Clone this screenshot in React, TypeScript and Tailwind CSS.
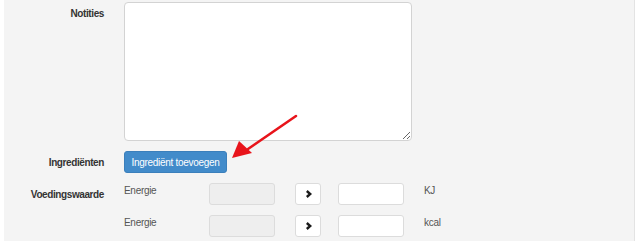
const font = { fontFamily: '"Liberation Sans", Arial, sans-serif' };

function Chevron() {
  return (
    <svg width="7" height="8" viewBox="0 0 7 8" className="block">
      <path d="M1.8 1 L5.2 4 L1.8 7" fill="none" stroke="#1a1a1a" strokeWidth="2.4" strokeLinejoin="miter" />
    </svg>
  );
}

function EnergyRow({ unit }: { unit: string }) {
  return (
    <div className="flex items-start h-[22px]">
      <span className="w-[85px] text-[10px] tracking-[-0.3px] text-[#555] leading-none pt-[3px]">Energie</span>
      <input
        disabled
        className="w-[66px] h-[22px] rounded-[3px] border border-[#dcdcdc] bg-[#eeeeee]"
      />
      <button className="ml-[20px] w-[26px] h-[22px] rounded-[3px] border border-[#dcdcdc] bg-white flex items-center justify-center">
        <Chevron />
      </button>
      <input className="ml-[17px] w-[66px] h-[22px] rounded-[3px] border border-[#dcdcdc] bg-white" />
      <span className="ml-[20px] text-[10px] tracking-[-0.3px] text-[#555] leading-none pt-[3px]">{unit}</span>
    </div>
  );
}

export default function App() {
  return (
    <div className="w-[640px] h-[241px] bg-white flex overflow-hidden" style={font}>
      <div className="ml-[4px] w-[631px] h-full bg-[#f4f4f4] border-r border-[#e3e3e3] relative">
        {/* Notities */}
        <div className="flex gap-[20px] pt-[2px]">
          <div className="w-[100px] text-right text-[10px] tracking-[-0.4px] font-bold text-[#333] pt-[4px]">Notities</div>
          <textarea className="w-[288px] h-[139px] rounded-[4px] border border-[#d3d3d3] bg-white resize" />
        </div>

        {/* Ingrediënten */}
        <div className="flex gap-[20px] mt-[10px] items-center">
          <div className="w-[100px] text-right text-[10px] tracking-[-0.4px] font-bold text-[#333]">Ingrediënten</div>
          <button className="w-[103px] h-[22px] rounded-[3px] bg-[#428bca] border border-[#3b7fbb] text-white text-[10px] tracking-[-0.3px] whitespace-nowrap px-0">
            Ingrediënt toevoegen
          </button>
        </div>

        {/* Voedingswaarde */}
        <div className="flex gap-[20px] mt-[10px]">
          <div className="w-[100px] text-right text-[10px] tracking-[-0.4px] font-bold text-[#333] pt-[4px]">Voedingswaarde</div>
          <div className="flex flex-col gap-[10px]">
            <EnergyRow unit="KJ" />
            <EnergyRow unit="kcal" />
          </div>
        </div>

        {/* red annotation arrow */}
        <svg className="absolute left-[222px] top-[108px]" width="82" height="58" viewBox="0 0 82 58">
          <line x1="70" y1="8" x2="22" y2="41" stroke="#e8141b" strokeWidth="2.6" strokeLinecap="round" />
          <polygon points="6,50 13,33 26,45" fill="#e8141b" />
        </svg>
      </div>
    </div>
  );
}
